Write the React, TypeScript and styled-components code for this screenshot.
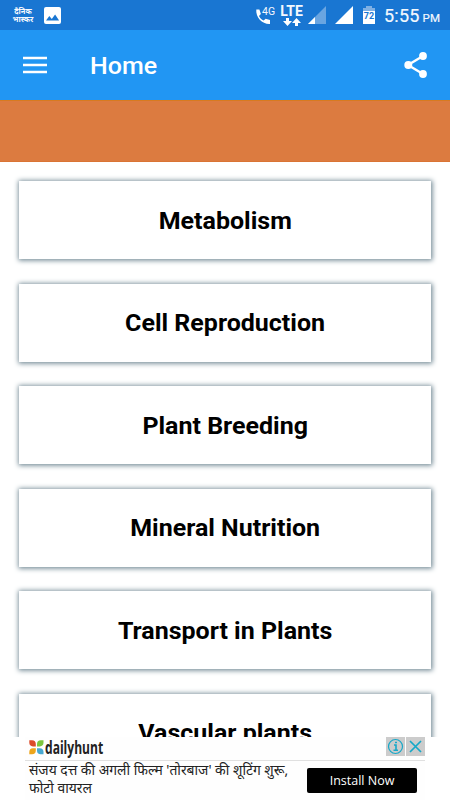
import React from 'react';
import styled, { createGlobalStyle } from 'styled-components';

const GlobalStyle = createGlobalStyle`
  * { box-sizing: border-box; }
  body { margin: 0; background: #fff; font-family: Roboto, "Noto Sans", sans-serif; }
`;

const Screen = styled.div`
  width: 450px;
  height: 800px;
  display: flex;
  flex-direction: column;
  overflow: hidden;
  background: #fff;
`;

const StatusBar = styled.div`
  flex: none;
  height: 30px;
  display: flex;
  align-items: center;
  padding: 0 10px 0 13px;
  background: #1976d2;
  color: #f4f8fe;
`;

const NewsMark = styled.div`
  width: 20px;
  padding-top: 2px;
  font: 700 7.5px/8px "Noto Sans Devanagari", "Noto Sans", sans-serif;
  text-align: center;
  white-space: nowrap;
  display: flex;
  flex-direction: column;
  align-items: center;
`;

const Glyph = styled.svg<{ $gap?: number }>`
  display: block;
  flex: none;
  margin-left: ${p => p.$gap ?? 0}px;
`;

const Spacer = styled.div`
  flex: 1;
`;

const CallIcon = styled.div`
  display: flex;
  width: 20px;
  height: 20px;
  position: relative;
`;

const NetworkTag = styled.span`
  position: absolute;
  left: 7px;
  top: 1px;
  font-size: 10.5px;
  line-height: 12px;
`;

const Lte = styled.div`
  display: flex;
  flex-direction: column;
  align-items: center;
  width: 23px;
  height: 21px;
  margin-left: 5px;
  font-size: 14px;
  font-weight: 700;
  line-height: 13px;
`;

const Clock = styled.div`
  margin-left: 9px;
  width: 56px;
  font-size: 18px;
  line-height: 24px;
  letter-spacing: 0.2px;
  white-space: nowrap;
  padding-top: 3px;
  -webkit-text-stroke: 0.2px #f4f8fe;
`;

const Meridiem = styled.span`
  font-size: 11.5px;
  margin-left: 3px;
`;

const Toolbar = styled.header`
  flex: none;
  height: 70px;
  display: flex;
  align-items: center;
  padding: 0 22px 0 23px;
  background: #2196f3;
  color: #fff;
`;

const Title = styled.h1`
  margin: 2px 0 0 43px;
  font-size: 24.5px;
  font-weight: 500;
  line-height: 32px;
  transform: scaleX(1.02);
  transform-origin: left;
`;

const Banner = styled.div`
  flex: none;
  height: 62px;
  background: #dc7b40;
  border-top: 1px solid #d87a20;
  border-bottom: 1px solid #da7434;
`;

const List = styled.main`
  flex: none;
  height: 575px;
  padding: 19px 19px 0;
  display: flex;
  flex-direction: column;
  gap: 24.6px;
  overflow: hidden;
`;

const Card = styled.div`
  flex: none;
  height: 78px;
  padding-top: 1px;
  display: flex;
  align-items: center;
  justify-content: center;
  background: #fff;
  box-shadow: 0 0 5px 1.5px #6f8792;
  color: #000;
  font-size: 24.5px;
  font-weight: 700;
  line-height: 30px;
`;

const CardLabel = styled.span`
  transform: scaleX(1.02);
`;

const Ad = styled.aside`
  flex: none;
  width: 400px;
  height: 63px;
  margin: 0 auto;
  background: #fefefe;
  display: flex;
  flex-direction: column;
`;

const AdHeader = styled.div`
  height: 24px;
  display: flex;
  align-items: flex-start;
  padding-left: 4px;
  border-bottom: 1px solid #e0e0e0;
`;

const Brand = styled.span`
  margin: 0 0 0 1px;
  width: 59px;
  color: #222;
  font: 700 18px/21px "Open Sans", sans-serif;
  white-space: nowrap;
`;

const BrandText = styled.span`
  display: block;
  width: max-content;
  transform: scaleX(0.67);
  transform-origin: left;
`;

const Choice = styled.div`
  width: 19px;
  height: 19px;
  margin-left: 1px;
  background: #ccc;
  display: grid;
  place-items: center;
`;

const AdBody = styled.div`
  display: flex;
  flex: 1;
  padding: 0 8px 0 4px;
`;

const AdCopy = styled.div`
  flex: 1;
  color: #222;
  font: 400 13.86px/18px "Noto Sans", "Noto Sans Devanagari", sans-serif;
  white-space: nowrap;
`;

const Install = styled.div`
  flex: none;
  width: 110px;
  height: 25px;
  margin-top: 7px;
  border-radius: 2px;
  background: #000;
  color: #fff;
  text-align: center;
  font: 400 12.5px/25px "Open Sans", sans-serif;
`;

const topics = [
  'Metabolism',
  'Cell Reproduction',
  'Plant Breeding',
  'Mineral Nutrition',
  'Transport in Plants',
  'Vascular plants',
];

export default function App() {
  return (
    <>
      <GlobalStyle />
      <Screen>
        <StatusBar>
          <NewsMark><span>दैनिक</span><span>भास्कर</span></NewsMark>
          <Glyph $gap={11} width="17" height="17" viewBox="0 0 17 17">
            <rect width="17" height="17" rx="2" fill="#fff" />
            <path d="M2 13.5 5.3 9l2.5 3 3.3-4.5 4 6Z" fill="#1976d2" />
          </Glyph>
          <Spacer />
          <CallIcon>
            <Glyph width="17" height="21" viewBox="0 0 17 21">
              <path d="M1.300 4.500h3.100l1.500 4.500-1.900 1.900c1.100 2.300 2.400 3.600 4.700 4.700l1.900-1.900 4.400 1.300v4C7.500 19.500.5 12.500 1.300 4.500Z" fill="#fff" />
            </Glyph>
            <NetworkTag>4G</NetworkTag>
          </CallIcon>
          <Lte>
            <span>LTE</span>
            <Glyph width="18" height="8" viewBox="0 0 18 8">
              <path d="M3 0h3v3h3L4.500 8 0 3h3ZM12 8h3V5h3L13.500 0 9 5h3Z" fill="#fff" />
            </Glyph>
          </Lte>
          <Glyph $gap={5} width="18" height="18" viewBox="0 0 18 18">
            <path d="M18 0v18H0Z" fill="#6aa5e1" />
            <path d="M7 11v7H0Z" fill="#fff" />
          </Glyph>
          <Glyph $gap={9} width="18" height="18" viewBox="0 0 18 18">
            <path d="M18 0v18H0Z" fill="#fff" />
          </Glyph>
          <Glyph $gap={10} width="12" height="18" viewBox="0 0 12 18">
            <path d="M3 0h6v2h3v5H0V2h3Z" fill="#7fb0e4" />
            <path d="M0 5h12v13H0Z" fill="#fff" />
            <text x="6" y="13" textAnchor="middle" fontSize="9" fontWeight="700" fill="#1976d2">72</text>
          </Glyph>
          <Clock>5:55<Meridiem>PM</Meridiem></Clock>
        </StatusBar>
        <Toolbar>
          <Glyph width="24" height="18" viewBox="0 0 24 18">
            <path d="M0 2h24M0 9h24M0 16h24" stroke="#fff" strokeWidth="2.4" />
          </Glyph>
          <Title>Home</Title>
          <Spacer />
          <Glyph width="24" height="26" viewBox="0 0 24 26">
            <path d="M19 4 4 13l15 9" fill="none" stroke="#fff" strokeWidth="2.4" />
            <g fill="#fff"><circle cx="19" cy="4" r="3.9" /><circle cx="4.300" cy="13" r="4" /><circle cx="19" cy="22" r="3.9" /></g>
          </Glyph>
        </Toolbar>
        <Banner />
        <List>
          {topics.map(topic => <Card key={topic}><CardLabel>{topic}</CardLabel></Card>)}
        </List>
        <Ad>
          <AdHeader>
            <Glyph width="15" height="19" viewBox="0 0 15 19">
              <path d="M.3 3.300h2.700a3.800 3.800 0 0 1 3.800 3.800v2.300H4A3.800 3.800 0 0 1 .3 5.600Z" fill="#dc4b2a" />
              <path d="M14.500 3.300h-2.700A3.800 3.800 0 0 0 8 7.100v2.300h2.800a3.800 3.800 0 0 0 3.700-3.800Z" fill="#7cc63f" />
              <path d="M.3 17.300h2.700a3.800 3.800 0 0 0 3.800-3.800v-2.300H4A3.800 3.800 0 0 0 .3 15Z" fill="#eda51b" />
              <path d="M14.500 17.300h-2.700A3.800 3.800 0 0 1 8 13.500v-2.300h2.800a3.800 3.800 0 0 1 3.700 3.800Z" fill="#46a8d1" />
            </Glyph>
            <Brand><BrandText>dailyhunt</BrandText></Brand>
            <Spacer />
            <Choice>
              <Glyph width="17" height="17" viewBox="0 0 17 17">
                <circle cx="8.500" cy="8.500" r="7" fill="none" stroke="#16a8c8" strokeWidth="1.200" />
                <path d="M7 7h2v5M6.500 12.300h4.500M8 4.500h2" fill="none" stroke="#16a8c8" strokeWidth="1.600" />
              </Glyph>
            </Choice>
            <Choice>
              <Glyph width="13" height="13" viewBox="0 0 13 13">
                <path d="m1 1 11 11M12 1 1 12" stroke="#16a8c8" strokeWidth="1.700" />
              </Glyph>
            </Choice>
          </AdHeader>
          <AdBody>
            <AdCopy>
              <div>संजय दत्त की अगली फिल्म 'तोरबाज' की शूटिंग शुरू,</div>
              <div>फोटो वायरल</div>
            </AdCopy>
            <Install>Install Now</Install>
          </AdBody>
        </Ad>
      </Screen>
    </>
  );
}
